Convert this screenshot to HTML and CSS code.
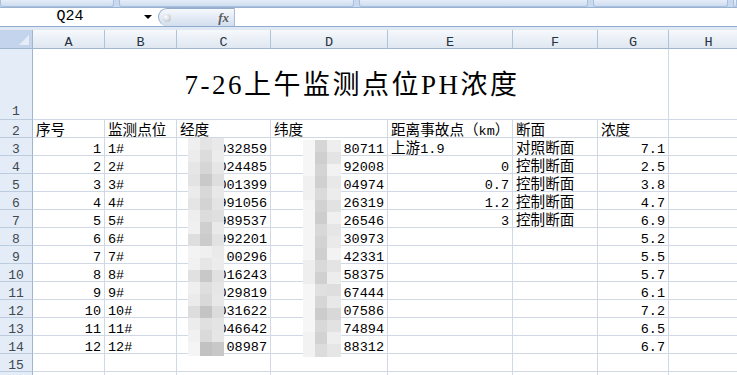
FILE: index.html
```html
<!DOCTYPE html>
<html lang="zh-CN">
<head>
    <meta charset="UTF-8">
    <title>7-26上午监测点位PH浓度</title>
    <link rel="stylesheet" href="styles.css">
</head>
<body>

    <!-- bottom edge of the ribbon -->
    <div class="ribbon">
        <span class="g1"></span>
        <span class="g2"></span>
        <span class="g3"></span>
        <span class="g4"></span>
        <span class="g5"></span>
    </div>

    <div class="formula-bar">
        <div class="name-box">Q24</div>
        <div class="name-arrow"></div>
        <div class="fx-pill"><span class="knob"></span><span class="fx">fx</span></div>
        <div class="formula-input"></div>
    </div>
    <div class="band"></div>

    <div class="sheet">
        <div class="row col-head">
            <div class="corner"></div>
            <div class="ch">A</div>
            <div class="ch">B</div>
            <div class="ch">C</div>
            <div class="ch">D</div>
            <div class="ch">E</div>
            <div class="ch">F</div>
            <div class="ch">G</div>
            <div class="ch">H</div>
        </div>

        <div class="row r-title">
            <div class="rh">1</div>
            <div class="c title">7-26上午监测点位PH浓度</div>
            <div class="c"></div>
        </div>

        <div class="row">
            <div class="rh">2</div>
            <div class="c"><span class="zh">序号</span></div>
            <div class="c"><span class="zh">监测点位</span></div>
            <div class="c"><span class="zh">经度</span></div>
            <div class="c"><span class="zh">纬度</span></div>
            <div class="c"><span class="zh">距离事故点（</span>km<span class="zh">）</span></div>
            <div class="c"><span class="zh">断面</span></div>
            <div class="c"><span class="zh">浓度</span></div>
            <div class="c"></div>
        </div>
        <div class="row">
            <div class="rh">3</div>
            <div class="c n">1</div>
            <div class="c">1#</div>
            <div class="c n">032859</div>
            <div class="c n">80711</div>
            <div class="c"><span class="zh">上游</span>1.9</div>
            <div class="c"><span class="zh">对照断面</span></div>
            <div class="c n">7.1</div>
            <div class="c"></div>
        </div>
        <div class="row">
            <div class="rh">4</div>
            <div class="c n">2</div>
            <div class="c">2#</div>
            <div class="c n">024485</div>
            <div class="c n">92008</div>
            <div class="c n">0</div>
            <div class="c"><span class="zh">控制断面</span></div>
            <div class="c n">2.5</div>
            <div class="c"></div>
        </div>
        <div class="row">
            <div class="rh">5</div>
            <div class="c n">3</div>
            <div class="c">3#</div>
            <div class="c n">001399</div>
            <div class="c n">04974</div>
            <div class="c n">0.7</div>
            <div class="c"><span class="zh">控制断面</span></div>
            <div class="c n">3.8</div>
            <div class="c"></div>
        </div>
        <div class="row">
            <div class="rh">6</div>
            <div class="c n">4</div>
            <div class="c">4#</div>
            <div class="c n">991056</div>
            <div class="c n">26319</div>
            <div class="c n">1.2</div>
            <div class="c"><span class="zh">控制断面</span></div>
            <div class="c n">4.7</div>
            <div class="c"></div>
        </div>
        <div class="row">
            <div class="rh">7</div>
            <div class="c n">5</div>
            <div class="c">5#</div>
            <div class="c n">989537</div>
            <div class="c n">26546</div>
            <div class="c n">3</div>
            <div class="c"><span class="zh">控制断面</span></div>
            <div class="c n">6.9</div>
            <div class="c"></div>
        </div>
        <div class="row">
            <div class="rh">8</div>
            <div class="c n">6</div>
            <div class="c">6#</div>
            <div class="c n">992201</div>
            <div class="c n">30973</div>
            <div class="c"></div>
            <div class="c"></div>
            <div class="c n">5.2</div>
            <div class="c"></div>
        </div>
        <div class="row">
            <div class="rh">9</div>
            <div class="c n">7</div>
            <div class="c">7#</div>
            <div class="c n">00296</div>
            <div class="c n">42331</div>
            <div class="c"></div>
            <div class="c"></div>
            <div class="c n">5.5</div>
            <div class="c"></div>
        </div>
        <div class="row">
            <div class="rh">10</div>
            <div class="c n">8</div>
            <div class="c">8#</div>
            <div class="c n">016243</div>
            <div class="c n">58375</div>
            <div class="c"></div>
            <div class="c"></div>
            <div class="c n">5.7</div>
            <div class="c"></div>
        </div>
        <div class="row">
            <div class="rh">11</div>
            <div class="c n">9</div>
            <div class="c">9#</div>
            <div class="c n">029819</div>
            <div class="c n">67444</div>
            <div class="c"></div>
            <div class="c"></div>
            <div class="c n">6.1</div>
            <div class="c"></div>
        </div>
        <div class="row">
            <div class="rh">12</div>
            <div class="c n">10</div>
            <div class="c">10#</div>
            <div class="c n">031622</div>
            <div class="c n">07586</div>
            <div class="c"></div>
            <div class="c"></div>
            <div class="c n">7.2</div>
            <div class="c"></div>
        </div>
        <div class="row">
            <div class="rh">13</div>
            <div class="c n">11</div>
            <div class="c">11#</div>
            <div class="c n">046642</div>
            <div class="c n">74894</div>
            <div class="c"></div>
            <div class="c"></div>
            <div class="c n">6.5</div>
            <div class="c"></div>
        </div>
        <div class="row">
            <div class="rh">14</div>
            <div class="c n">12</div>
            <div class="c">12#</div>
            <div class="c n">08987</div>
            <div class="c n">88312</div>
            <div class="c"></div>
            <div class="c"></div>
            <div class="c n">6.7</div>
            <div class="c"></div>
        </div>
        <div class="row">
            <div class="rh">15</div>
            <div class="c"></div>
            <div class="c"></div>
            <div class="c"></div>
            <div class="c"></div>
            <div class="c"></div>
            <div class="c"></div>
            <div class="c"></div>
            <div class="c"></div>
        </div>
        <!-- row 16, only its top edge is in view -->
        <div class="row">
            <div class="rh"></div>
            <div class="c"></div>
            <div class="c"></div>
            <div class="c"></div>
            <div class="c"></div>
            <div class="c"></div>
            <div class="c"></div>
            <div class="c"></div>
            <div class="c"></div>
        </div>

        <!-- pixelated cover over the coordinates -->
        <div class="blur blur-c"><i></i><i></i><i></i></div>
        <div class="blur blur-d"><i></i><i></i><i></i></div>
    </div>

</body>
</html>
```

FILE: styles.css
```css
body {
    margin: 0;
    width: 737px;
    height: 375px;
    overflow: hidden;
    background-color: white;
    font-family: "Liberation Mono", "Noto Sans CJK SC", monospace;
}

/* Ribbon edge at the very top */
.ribbon {
    display: flex;
    gap: 5px;
    height: 7px;
    background-color: #c9d9ee;
    border-bottom: 1px solid #9bb3d2;
}

.ribbon span {
    background: linear-gradient(#e4edf8, #cfddf0);
    border: 1px solid #a9c0dd;
    border-top: none;
    border-radius: 0 0 3px 3px;
}

.ribbon .g1 { width: 112px; }
.ribbon .g2 { width: 233px; }
.ribbon .g3 { width: 227px; }
.ribbon .g4 { width: 133px; }
.ribbon .g5 { flex: 1; }

/* Name box + formula input */
.formula-bar {
    display: flex;
    height: 18px;
    background-color: white;
    border-bottom: 1px solid #8fabcf;
}

.name-box {
    width: 140px;
    text-align: center;
    font-size: 15px;
    line-height: 18px;
    color: #000;
}

.name-arrow {
    width: 15px;
    display: flex;
    align-items: center;
    justify-content: center;
}

.name-arrow::after {
    content: "";
    border-left: 4px solid transparent;
    border-right: 4px solid transparent;
    border-top: 4px solid #000;
}

.fx-pill {
    box-sizing: border-box;
    width: 77px;
    margin-left: 3px;
    display: flex;
    align-items: center;
    justify-content: space-between;
    padding: 0 5px 0 4px;
    background: linear-gradient(#f6f8fc, #d2deee);
    border: 1px solid #93acc9;
    border-bottom: none;
    border-right-color: #a8bcd6;
    border-radius: 10px 0 0 10px;
}

.knob {
    width: 8px;
    height: 8px;
    border-radius: 50%;
    background: radial-gradient(circle at 35% 35%, #ffffff, #aeb6c2);
}

.fx {
    font-family: "Liberation Serif", serif;
    font-style: italic;
    font-weight: bold;
    font-size: 13px;
    color: #5a5a5a;
}

.formula-input {
    flex: 1;
}

.band {
    height: 3px;
    background-color: #e0e8f4;
}

/* Worksheet */
.sheet {
    position: relative;
}

.row {
    display: grid;
    grid-template-columns: 33px 72px 72px 94px 117px 125px 85px 71px 80px;
    height: 18px;
}

.row > div {
    box-sizing: border-box;
}

.col-head {
    height: 19px;
}

.r-title {
    height: 71px;
}

.corner {
    position: relative;
    background-color: #c3d4ec;
    border-right: 1px solid #9eb6ce;
    border-bottom: 1px solid #9eb6ce;
}

.corner::after {
    content: "";
    position: absolute;
    right: 3px;
    bottom: 3px;
    border-left: 10px solid transparent;
    border-bottom: 10px solid #e6edf6;
}

.ch {
    background: linear-gradient(#f6f9fc, #dfe7f1);
    border-right: 1px solid #afc3da;
    border-bottom: 1px solid #9eb6ce;
    text-align: center;
    font-size: 13.5px;
    line-height: 11px;
    padding-top: 7px;
    color: #27323e;
}

.rh {
    background-color: #e4ecf7;
    border-right: 1px solid #9eb6ce;
    border-bottom: 1px solid #bccbde;
    text-align: center;
    font-size: 13px;
    line-height: 11px;
    padding-top: 6px;
    color: #404850;
}

.r-title .rh {
    padding-top: 57px;
}

.c {
    border-right: 1px solid #d0d7e5;
    border-bottom: 1px solid #d0d7e5;
    padding: 6px 3px 0;
    font-size: 13.5px;
    line-height: 11px;
    white-space: nowrap;
    color: #000;
}

.n {
    text-align: right;
}

.zh {
    font-family: "Noto Sans CJK SC", sans-serif;
    font-size: 14.6px;
    line-height: 0;
}

/* merged A1:G1 */
.title {
    grid-column: 2 / 9;
    display: flex;
    align-items: center;
    justify-content: center;
    padding: 3px 0 0 3px;
    font-family: "Liberation Serif", "Noto Sans CJK SC", serif;
    font-size: 27px;
    letter-spacing: 2.5px;
    line-height: 1;
}

/* mosaic over the hidden digits */
.blur {
    position: absolute;
    display: flex;
}

.blur i {
    display: block;
}

.blur-c {
    left: 188px;
    top: 108px;
    height: 218px;
}

.blur-c i:nth-child(1) {
    width: 12px;
    background: linear-gradient(#efefef 0 12px, #ececec 12px 24px, #e6e6e6 24px 36px, #e3e3e3 36px 48px, #ebebeb 48px 60px, #e5e5e5 60px 72px, #eeeeee 72px 84px, #f0f0f0 84px 96px, #dedede 96px 108px, #f3f3f3 108px 120px, #f1f1f1 120px 132px, #e1e1e1 132px 144px, #efefef 144px 156px, #ebebeb 156px 168px, #dddddd 168px 180px, #ececec 180px 192px, #f1f1f1 192px 204px, #f5f5f5 204px);
}

.blur-c i:nth-child(2) {
    width: 12px;
    background: linear-gradient(#e4e4e4 0 12px, #dcdcdc 12px 24px, #d6d6d6 24px 36px, #c9c9c9 36px 48px, #d8d8d8 48px 60px, #d3d3d3 60px 72px, #dcdcdc 72px 84px, #cfcfcf 84px 96px, #cbcbcb 96px 108px, #f0f0f0 108px 120px, #e6e6e6 120px 132px, #c8c8c8 132px 144px, #dedede 144px 156px, #d9d9d9 156px 168px, #c4c4c4 168px 180px, #e0e0e0 180px 192px, #dadada 192px 204px, #c2c2c2 204px);
}

.blur-c i:nth-child(3) {
    width: 12px;
    background: linear-gradient(#e9e9e9 0 12px, #ececec 12px 24px, #e6e6e6 24px 36px, #dedede 36px 48px, #e8e8e8 48px 60px, #e4e4e4 60px 72px, #dfdfdf 72px 84px, #e9e9e9 84px 96px, #e2e2e2 96px 108px, #eaeaea 108px 120px, #ececec 120px 132px, #e1e1e1 132px 144px, #e6e6e6 144px 156px, #e8e8e8 156px 168px, #dcdcdc 168px 180px, #e4e4e4 180px 192px, #e6e6e6 192px 204px, #c8c8c8 204px);
}

.blur-d {
    left: 303px;
    top: 110px;
    height: 217px;
}

.blur-d i:nth-child(1) {
    width: 12px;
    background: linear-gradient(#f6f6f6 0 36px, #f0f0f0 36px 60px, #f5f5f5 60px 120px, #eeeeee 120px 144px, #f6f6f6 144px 192px, #f2f2f2 192px);
}

.blur-d i:nth-child(2) {
    width: 12px;
    background: linear-gradient(#d6d6d6 0 12px, #cfcfcf 12px 24px, #d4d4d4 24px 36px, #d0d0d0 36px 48px, #dadada 48px 60px, #d2d2d2 60px 72px, #cdcdcd 72px 84px, #d8d8d8 84px 96px, #d3d3d3 96px 108px, #cfcfcf 108px 120px, #d9d9d9 120px 132px, #d0d0d0 132px 144px, #e0e0e0 144px 156px, #d6d6d6 156px 168px, #cccccc 168px 180px, #d8d8d8 180px 192px, #d2d2d2 192px 204px, #dcdcdc 204px);
}

.blur-d i:nth-child(3) {
    width: 14px;
    background: linear-gradient(#eeeeee 0 12px, #e4e4e4 12px 24px, #f2f2f2 24px 36px, #e8e8e8 36px 48px, #ececec 48px 60px, #e2e2e2 60px 72px, #f0f0f0 72px 84px, #e6e6e6 84px 96px, #eaeaea 96px 108px, #f3f3f3 108px 120px, #e4e4e4 120px 132px, #ededed 132px 144px, #dedede 144px 156px, #e8e8e8 156px 168px, #d8d8d8 168px 180px, #e2e2e2 180px 192px, #eeeeee 192px 204px, #e6e6e6 204px);
}
```
